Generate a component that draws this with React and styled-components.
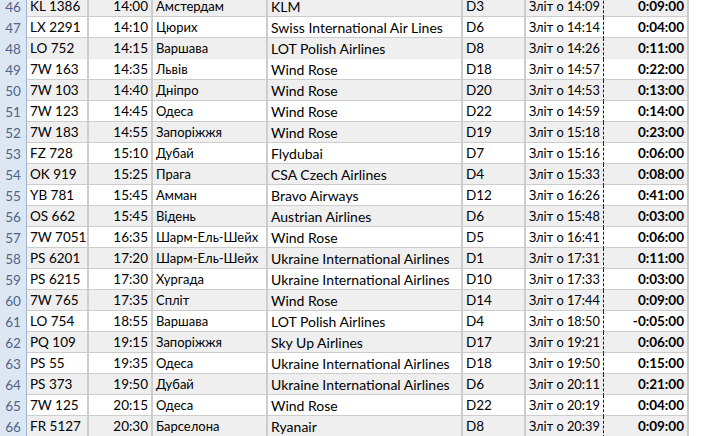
import React from "react";
import styled, { createGlobalStyle } from "styled-components";

const Global = createGlobalStyle`
  html, body { margin: 0; padding: 0; background: #ffffff; overflow: hidden; }
  body { font-family: Lato, "Open Sans", sans-serif; }
`;

const COLS = "27px 62px 64px 115px 195px 63px 78px 85px 1fr";

const Sheet = styled.div`
  display: flex;
  flex-direction: column;
  margin-top: -4px;
  width: 703px;
  font-family: Lato, "Liberation Sans", sans-serif;
  font-size: 13.5px;
  color: #000;
`;

const Row = styled.div`
  display: grid;
  grid-template-columns: ${COLS};
  height: 21px;
`;

const RowHead = styled.div`
  box-sizing: border-box;
  background: #dde7f4;
  border-right: 1px solid #9eb6ce;
  border-bottom: 1px solid #c3d2e6;
  color: #4d6587;
  font-size: 13.5px;
  line-height: 20px;
  padding-top: 1px;
  text-align: center;
`;

const Cell = styled.div`
  box-sizing: border-box;
  background: ${(p) => (p.$shade ? "#efefef" : "#ffffff")};
  border-right: ${(p) => (p.$dashRight ? "1px dashed #1a1a1a" : "2px solid #cdcdcd")};
  border-bottom: ${(p) => (p.$breakBelow ? "1px dashed #1a1a1a" : "2px solid #cdcdcd")};
  padding-left: 3px;
  padding-right: ${(p) => (p.$align === "right" ? "3px" : "0")};
  text-align: ${(p) => p.$align || "left"};
  font-size: ${(p) => p.$size || "13.5px"};
  font-weight: ${(p) => (p.$bold ? 700 : 400)};
  line-height: 19px;
  padding-top: 1px;
  white-space: nowrap;
  overflow: hidden;
`;

const Blank = styled.div`
  box-sizing: border-box;
  background: #ffffff;
  border-bottom: ${(p) => (p.$breakBelow ? "1px dashed #1a1a1a" : "1px solid #dadcdd")};
`;

const data = [
  ["46", "KL 1386", "14:00", "Амстердам", "KLM", "D3", "Зліт о 14:09", "0:09:00"],
  ["47", "LX 2291", "14:10", "Цюрих", "Swiss International Air Lines", "D6", "Зліт о 14:14", "0:04:00"],
  ["48", "LO 752", "14:15", "Варшава", "LOT Polish Airlines", "D8", "Зліт о 14:26", "0:11:00"],
  ["49", "7W 163", "14:35", "Львів", "Wind Rose", "D18", "Зліт о 14:57", "0:22:00"],
  ["50", "7W 103", "14:40", "Дніпро", "Wind Rose", "D20", "Зліт о 14:53", "0:13:00"],
  ["51", "7W 123", "14:45", "Одеса", "Wind Rose", "D22", "Зліт о 14:59", "0:14:00"],
  ["52", "7W 183", "14:55", "Запоріжжя", "Wind Rose", "D19", "Зліт о 15:18", "0:23:00"],
  ["53", "FZ 728", "15:10", "Дубай", "Flydubai", "D7", "Зліт о 15:16", "0:06:00"],
  ["54", "OK 919", "15:25", "Прага", "CSA Czech Airlines", "D4", "Зліт о 15:33", "0:08:00"],
  ["55", "YB 781", "15:45", "Амман", "Bravo Airways", "D12", "Зліт о 16:26", "0:41:00"],
  ["56", "OS 662", "15:45", "Відень", "Austrian Airlines", "D6", "Зліт о 15:48", "0:03:00"],
  ["57", "7W 7051", "16:35", "Шарм-Ель-Шейх", "Wind Rose", "D5", "Зліт о 16:41", "0:06:00"],
  ["58", "PS 6201", "17:20", "Шарм-Ель-Шейх", "Ukraine International Airlines", "D1", "Зліт о 17:31", "0:11:00"],
  ["59", "PS 6215", "17:30", "Хургада", "Ukraine International Airlines", "D10", "Зліт о 17:33", "0:03:00"],
  ["60", "7W 765", "17:35", "Спліт", "Wind Rose", "D14", "Зліт о 17:44", "0:09:00"],
  ["61", "LO 754", "18:55", "Варшава", "LOT Polish Airlines", "D4", "Зліт о 18:50", "-0:05:00"],
  ["62", "PQ 109", "19:15", "Запоріжжя", "Sky Up Airlines", "D17", "Зліт о 19:21", "0:06:00"],
  ["63", "PS 55", "19:35", "Одеса", "Ukraine International Airlines", "D18", "Зліт о 19:50", "0:15:00"],
  ["64", "PS 373", "19:50", "Дубай", "Ukraine International Airlines", "D6", "Зліт о 20:11", "0:21:00"],
  ["65", "7W 125", "20:15", "Одеса", "Wind Rose", "D22", "Зліт о 20:19", "0:04:00"],
  ["66", "FR 5127", "20:30", "Барселона", "Ryanair", "D8", "Зліт о 20:39", "0:09:00"],
];

export default function App() {
  return (
    <>
      <Global />
      <Sheet>
        {data.map((r, i) => {
          const shade = i % 2 === 0;
          const brk = r[0] === "48";
          const props = { $shade: shade, $breakBelow: brk };
          return (
            <Row key={r[0]}>
              <RowHead>{r[0]}</RowHead>
              <Cell {...props}>{r[1]}</Cell>
              <Cell {...props} $align="right">{r[2]}</Cell>
              <Cell {...props} $size="13px">{r[3]}</Cell>
              <Cell {...props} $size="14px">{r[4]}</Cell>
              <Cell {...props}>{r[5]}</Cell>
              <Cell {...props} $size="12.8px" $dashRight>{r[6]}</Cell>
              <Cell {...props} $align="right" $bold>{r[7]}</Cell>
              <Blank $breakBelow={brk} />
            </Row>
          );
        })}
      </Sheet>
    </>
  );
}
